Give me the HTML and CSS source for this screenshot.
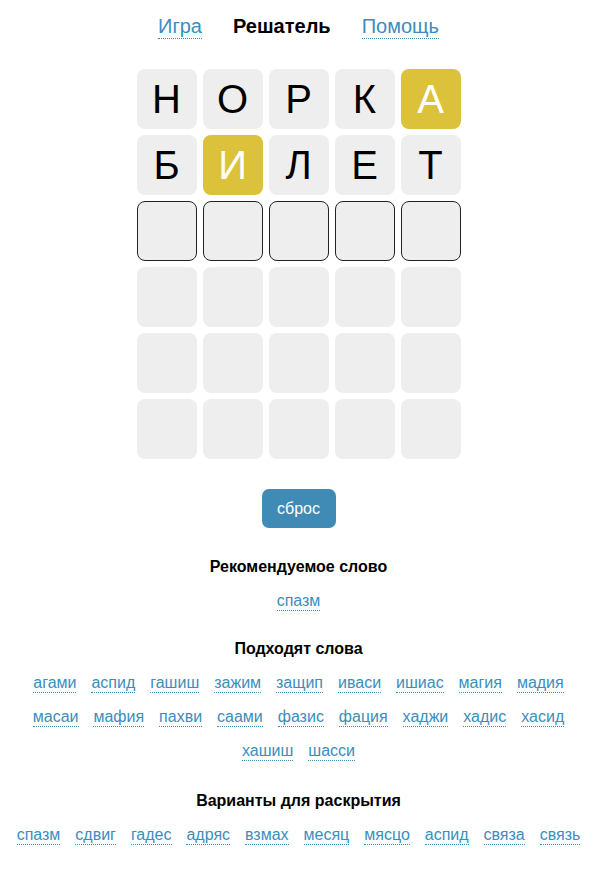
FILE: index.html
```html
<!DOCTYPE html>
<html lang="ru">
<head>
<meta charset="utf-8">
<title>Решатель</title>
<link rel="stylesheet" href="styles.css">
</head>
<body>
<nav class="nav">
  <a class="nav-link" href="#">Игра</a>
  <span class="nav-current">Решатель</span>
  <a class="nav-link" href="#">Помощь</a>
</nav>
<div class="board">
  <div class="tile">Н</div><div class="tile">О</div><div class="tile">Р</div><div class="tile">К</div><div class="tile tile-yellow">А</div>
  <div class="tile">Б</div><div class="tile tile-yellow">И</div><div class="tile">Л</div><div class="tile">Е</div><div class="tile">Т</div>
  <div class="tile tile-active"></div><div class="tile tile-active"></div><div class="tile tile-active"></div><div class="tile tile-active"></div><div class="tile tile-active"></div>
  <div class="tile"></div><div class="tile"></div><div class="tile"></div><div class="tile"></div><div class="tile"></div>
  <div class="tile"></div><div class="tile"></div><div class="tile"></div><div class="tile"></div><div class="tile"></div>
  <div class="tile"></div><div class="tile"></div><div class="tile"></div><div class="tile"></div><div class="tile"></div>
</div>
<div class="actions"><button class="reset">сброс</button></div>
<section class="block block-rec">
  <h3 class="title">Рекомендуемое слово</h3>
  <div class="words"><a class="word" href="#">спазм</a></div>
</section>
<section class="block block-fit">
  <h3 class="title">Подходят слова</h3>
  <div class="words">
    <a class="word" href="#">агами</a> <a class="word" href="#">аспид</a> <a class="word" href="#">гашиш</a> <a class="word" href="#">зажим</a> <a class="word" href="#">защип</a> <a class="word" href="#">иваси</a> <a class="word" href="#">ишиас</a> <a class="word" href="#">магия</a> <a class="word" href="#">мадия</a> <a class="word" href="#">масаи</a> <a class="word" href="#">мафия</a> <a class="word" href="#">пахви</a> <a class="word" href="#">саами</a> <a class="word" href="#">фазис</a> <a class="word" href="#">фация</a> <a class="word" href="#">хаджи</a> <a class="word" href="#">хадис</a> <a class="word" href="#">хасид</a> <a class="word" href="#">хашиш</a> <a class="word" href="#">шасси</a>
  </div>
</section>
<section class="block block-open">
  <h3 class="title">Варианты для раскрытия</h3>
  <div class="words">
    <a class="word" href="#">спазм</a> <a class="word" href="#">сдвиг</a> <a class="word" href="#">гадес</a> <a class="word" href="#">адряс</a> <a class="word" href="#">взмах</a> <a class="word" href="#">месяц</a> <a class="word" href="#">мясцо</a> <a class="word" href="#">аспид</a> <a class="word" href="#">связа</a> <a class="word" href="#">связь</a>
  </div>
</section>
</body>
</html>
```
FILE: styles.css
```css
html, body {
  margin: 0;
  padding: 0;
  background: #ffffff;
}
body {
  font-family: "Liberation Sans", Arial, sans-serif;
  color: #000;
  width: 595px;
  box-sizing: border-box;
  padding-left: 2px;
}
.nav {
  display: flex;
  justify-content: center;
  gap: 31px;
  padding-top: 14px;
  font-size: 20px;
  line-height: 24px;
}
.nav-link {
  color: #3b8dbd;
  text-decoration: none;
  border-bottom: 1px dotted #3b8dbd;
}
.nav-current {
  font-weight: bold;
}
.board {
  display: grid;
  grid-template-columns: repeat(5, 60px);
  grid-auto-rows: 60px;
  gap: 6px;
  justify-content: center;
  margin-top: 30px;
}
.tile {
  background: #eeeeee;
  border-radius: 8px;
  display: flex;
  align-items: center;
  justify-content: center;
  font-size: 40px;
  box-sizing: border-box;
}
.tile-yellow {
  background: #dbc23a;
  color: #fff;
}
.tile-active {
  border: 1px solid #222;
}
.actions {
  display: flex;
  justify-content: center;
  margin-top: 30px;
}
.reset {
  background: #3f8bb6;
  color: #fff;
  border: none;
  border-radius: 7px;
  width: 74px;
  height: 39px;
  font-family: "Liberation Sans", Arial, sans-serif;
  font-size: 16px;
  padding: 0;
}
.block {
  text-align: center;
}
.title {
  font-size: 16px;
  font-weight: bold;
  margin: 0;
  line-height: 20px;
}
.block-rec { margin-top: 29px; }
.block-fit { margin-top: 21px; }
.block-open { margin-top: 23px; }
.words {
  margin-top: 7px;
  font-size: 16px;
  line-height: 34px;
  padding: 0;
  word-spacing: -4px;
}
.word {
  display: inline-block;
  line-height: 18px;
  margin: 0 7.25px;
  word-spacing: normal;
  color: #3b8dbd;
  text-decoration: none;
  border-bottom: 1px dotted #3b8dbd;
}
```
